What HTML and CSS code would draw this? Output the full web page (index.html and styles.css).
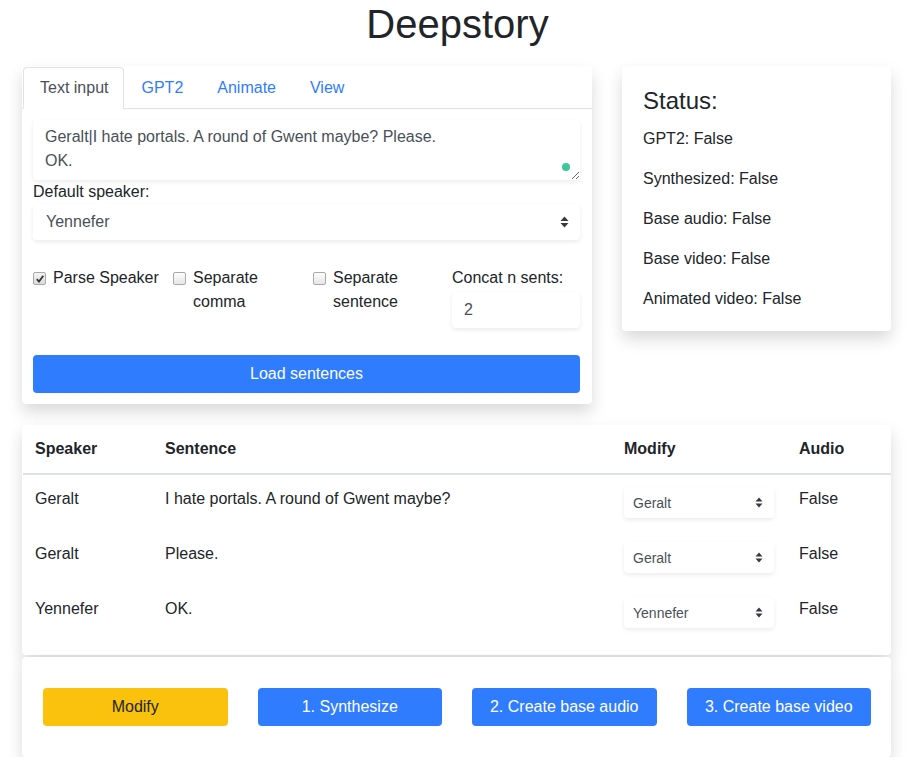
FILE: index.html
```html
<!DOCTYPE html>
<html>
<head>
<meta charset="utf-8">
<title>Deepstory</title>
<link rel="stylesheet" href="styles.css">
</head>
<body>
<h1 class="title">Deepstory</h1>
<main class="page">
  <section class="top-grid">
    <div class="card input-card">
      <nav class="tabs">
        <a class="tab active">Text input</a>
        <a class="tab">GPT2</a>
        <a class="tab">Animate</a>
        <a class="tab">View</a>
      </nav>
      <div class="input-body">
        <div class="ta-wrap">
          <textarea class="textarea" rows="2">Geralt|I hate portals. A round of Gwent maybe? Please.
OK.</textarea>
          <span class="dot"></span>
        </div>
        <label class="label">Default speaker:</label>
        <div class="select big">
          <span>Yennefer</span>
          <svg class="arrows" width="9" height="12" viewBox="0 0 9 12"><path d="M4.5 0.5 L8.5 5 L0.5 5 Z M0.5 7 L8.5 7 L4.5 11.5 Z" fill="#343a40"/></svg>
        </div>
        <div class="options">
          <label class="check"><span class="box checked"><svg width="10" height="10" viewBox="0 0 10 10"><path d="M1.8 5.2 L4 7.6 L8.3 1.8" fill="none" stroke="#333" stroke-width="1.8"/></svg></span><span>Parse Speaker</span></label>
          <label class="check"><span class="box"></span><span>Separate<br>comma</span></label>
          <label class="check"><span class="box"></span><span>Separate<br>sentence</span></label>
          <div class="concat">
            <span class="concat-label">Concat n sents:</span>
            <div class="num">2</div>
          </div>
        </div>
        <button class="btn primary wide">Load sentences</button>
      </div>
    </div>
    <div class="card status-card">
      <h4 class="status-title">Status:</h4>
      <p>GPT2: False</p>
      <p>Synthesized: False</p>
      <p>Base audio: False</p>
      <p>Base video: False</p>
      <p class="last">Animated video: False</p>
    </div>
  </section>

  <section class="card table-card">
    <table class="table">
      <colgroup><col class="c1"><col class="c2"><col class="c3"><col class="c4"></colgroup>
      <thead>
        <tr><th>Speaker</th><th>Sentence</th><th>Modify</th><th>Audio</th></tr>
      </thead>
      <tbody>
        <tr><td>Geralt</td><td>I hate portals. A round of Gwent maybe?</td><td><div class="select small"><span>Geralt</span><svg class="arrows" width="8" height="11" viewBox="0 0 8 11"><path d="M4 0.5 L7.5 4.5 L0.5 4.5 Z M0.5 6.5 L7.5 6.5 L4 10.5 Z" fill="#343a40"/></svg></div></td><td>False</td></tr>
        <tr><td>Geralt</td><td>Please.</td><td><div class="select small"><span>Geralt</span><svg class="arrows" width="8" height="11" viewBox="0 0 8 11"><path d="M4 0.5 L7.5 4.5 L0.5 4.5 Z M0.5 6.5 L7.5 6.5 L4 10.5 Z" fill="#343a40"/></svg></div></td><td>False</td></tr>
        <tr><td>Yennefer</td><td>OK.</td><td><div class="select small"><span>Yennefer</span><svg class="arrows" width="8" height="11" viewBox="0 0 8 11"><path d="M4 0.5 L7.5 4.5 L0.5 4.5 Z M0.5 6.5 L7.5 6.5 L4 10.5 Z" fill="#343a40"/></svg></div></td><td>False</td></tr>
      </tbody>
    </table>
  </section>

  <section class="card actions">
    <button class="btn warning">Modify</button>
    <button class="btn primary">1. Synthesize</button>
    <button class="btn primary">2. Create base audio</button>
    <button class="btn primary">3. Create base video</button>
  </section>
</main>
</body>
</html>
```

FILE: styles.css
```css
* { box-sizing: border-box; }
html, body { margin: 0; padding: 0; background: #fff; }
body {
  font-family: "Liberation Sans", Arial, sans-serif;
  font-size: 16px;
  line-height: 24px;
  color: #212529;
}
.title {
  margin: 0 0 18px;
  height: 48px;
  font-size: 40px;
  line-height: 48px;
  font-weight: 400;
  text-align: center;
}
.page {
  width: 869px;
  margin-left: 22px;
  display: flex;
  flex-direction: column;
}
.card {
  background: #fff;
  border-radius: 4px;
  box-shadow: 0 8px 16px rgba(0,0,0,.15);
}
.top-grid {
  display: grid;
  grid-template-columns: 570px 269px;
  column-gap: 30px;
  align-items: start;
  margin-bottom: 21px;
}
.tabs {
  display: flex;
  border-bottom: 1px solid #dee2e6;
  padding: 1px 0 0 1px;
}
.tab {
  display: block;
  padding: 8px 16px;
  margin-bottom: -1px;
  border: 1px solid transparent;
  border-radius: 4px 4px 0 0;
  color: #2f7cff;
  line-height: 24px;
  text-decoration: none;
}
.tab.active {
  color: #495057;
  border-color: #dee2e6 #dee2e6 #fff;
  background: #fff;
  padding-right: 15px;
}
.input-body {
  padding: 11px 12px 11px 11px;
  display: flex;
  flex-direction: column;
}
.ta-wrap { position: relative; }
.textarea {
  display: block;
  width: 100%;
  height: 60px;
  padding: 5px 12px;
  border: none;
  border-radius: 4px;
  box-shadow: 0 2px 4px rgba(0,0,0,.08);
  font: inherit;
  line-height: 24px;
  color: #495057;
  resize: vertical;
  overflow: hidden;
}
.dot {
  position: absolute;
  right: 10px;
  top: 43px;
  width: 8px;
  height: 8px;
  border-radius: 50%;
  background: #3cc798;
}
.label { display: block; line-height: 24px; }
.select {
  display: flex;
  align-items: center;
  justify-content: space-between;
  background: #fff;
  border-radius: 4px;
  box-shadow: 0 2px 4px rgba(0,0,0,.08);
  color: #495057;
}
.select.big {
  height: 36px;
  padding: 0 11px 0 13px;
}
.select.small {
  width: 150px;
  height: 31px;
  padding: 0 11px 0 9px;
  font-size: 14px;
}
.options {
  display: grid;
  grid-template-columns: 140px 140px 139px 1fr;
  margin-top: 26px;
  align-items: start;
}
.check {
  display: flex;
  align-items: flex-start;
  gap: 7px;
  line-height: 24px;
}
.box {
  flex: none;
  width: 13px;
  height: 13px;
  margin-top: 6px;
  border: 1px solid #a9a9a9;
  border-radius: 2px;
  background: linear-gradient(#fdfdfd, #e6e6e6);
  display: flex;
  align-items: center;
  justify-content: center;
}
.box.checked { background: linear-gradient(#f4f4f4, #dcdcdc); }
.concat { display: flex; flex-direction: column; }
.concat-label { line-height: 24px; }
.num {
  height: 36px;
  margin-top: 2px;
  padding: 6px 12px;
  border-radius: 4px;
  box-shadow: 0 2px 4px rgba(0,0,0,.08);
  color: #495057;
}
.btn {
  height: 38px;
  border: none;
  border-radius: 4px;
  font: inherit;
  line-height: 24px;
  padding: 7px 12px;
  text-align: center;
}
.btn.primary { background: #2f7cff; color: #fff; }
.btn.warning { background: #fac20c; color: #212529; }
.btn.wide { width: 100%; margin-top: 27px; }
.status-card { padding: 20px 21px 20px; }
.status-title {
  margin: 0 0 12px;
  font-size: 24px;
  line-height: 29px;
  font-weight: 400;
}
.status-card p { margin: 0 0 16px; }
.status-card p.last { margin: 0; }
.table-card { padding: 0 0 15px 1px; margin-bottom: 2px; }
.table { width: 100%; border-collapse: collapse; }
.c1 { width: 130px; }
.c2 { width: 459px; }
.c3 { width: 175px; }
.table th {
  text-align: left;
  font-weight: 700;
  padding: 12px;
  border-bottom: 2px solid #dee2e6;
  line-height: 24px;
}
.table td {
  padding: 12px;
  vertical-align: top;
  line-height: 24px;
}
.actions {
  display: grid;
  grid-template-columns: repeat(4, 1fr);
  column-gap: 30px;
  padding: 31px 20px 31px 21px;
}
```
